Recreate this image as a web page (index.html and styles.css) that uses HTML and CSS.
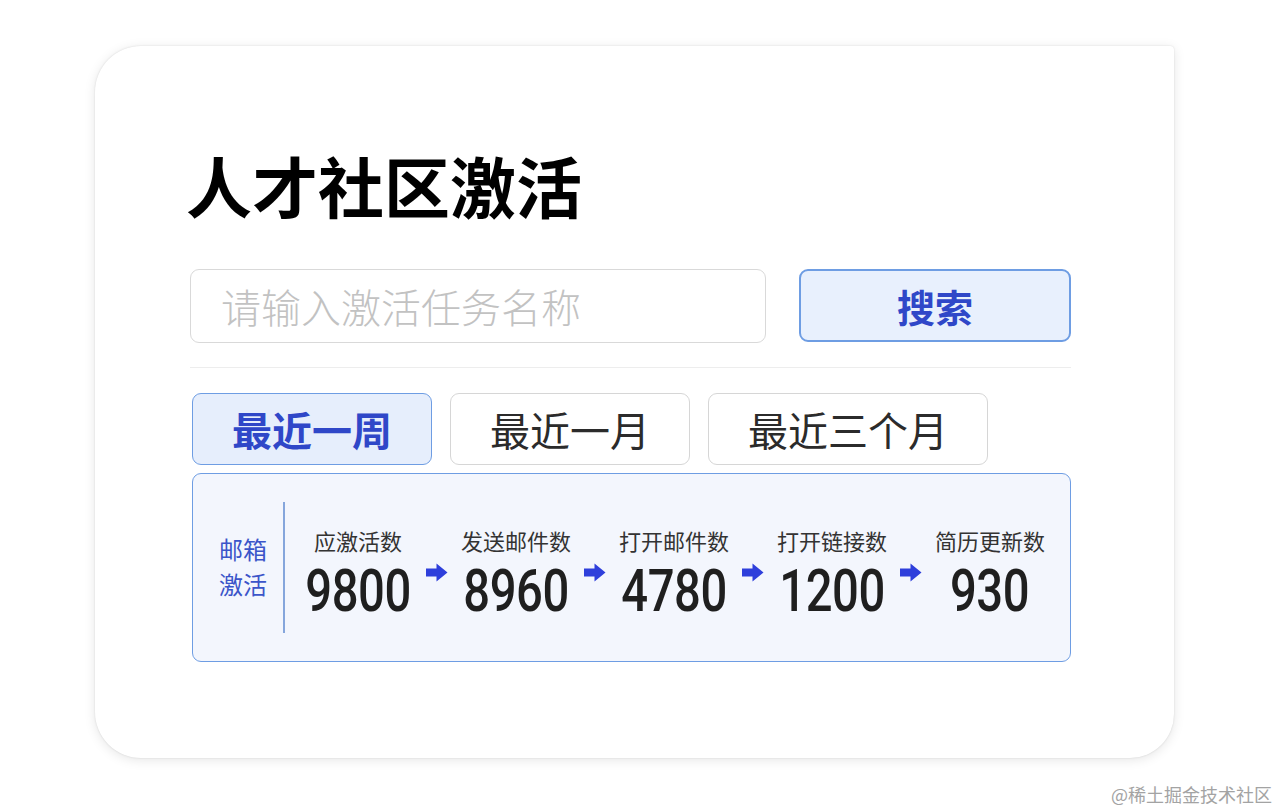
FILE: index.html
```html
<!DOCTYPE html>
<html lang="zh-CN">
<head>
<meta charset="utf-8">
<title>人才社区激活</title>
<link rel="stylesheet" href="styles.css">
</head>
<body>
<div class="page">
  <div class="card">
    <h1 class="title">人才社区激活</h1>
    <div class="search-row">
      <input class="search-input" type="text" placeholder="请输入激活任务名称">
      <button class="search-btn">搜索</button>
    </div>
    <div class="divider"></div>
    <div class="tabs">
      <div class="tab active">最近一周</div>
      <div class="tab">最近一月</div>
      <div class="tab">最近三个月</div>
    </div>
    <div class="panel">
      <div class="side">
        <div class="side-label"><div class="side-line-text">邮箱</div><div class="side-line-text">激活</div></div>
        <div class="side-line"></div>
      </div>
      <div class="stats">
        <div class="stat">
          <div class="stat-label">应激活数</div>
          <div class="stat-num"><span>9800</span></div>
        </div>
        <div class="arrow"><svg width="22" height="19" viewBox="0 0 22 19"><path d="M0 5.5H10.5V0.5L21.5 9.5L10.5 18.5V13.5H0Z" fill="#2e3fdb"/></svg></div>
        <div class="stat">
          <div class="stat-label">发送邮件数</div>
          <div class="stat-num"><span>8960</span></div>
        </div>
        <div class="arrow"><svg width="22" height="19" viewBox="0 0 22 19"><path d="M0 5.5H10.5V0.5L21.5 9.5L10.5 18.5V13.5H0Z" fill="#2e3fdb"/></svg></div>
        <div class="stat">
          <div class="stat-label">打开邮件数</div>
          <div class="stat-num"><span>4780</span></div>
        </div>
        <div class="arrow"><svg width="22" height="19" viewBox="0 0 22 19"><path d="M0 5.5H10.5V0.5L21.5 9.5L10.5 18.5V13.5H0Z" fill="#2e3fdb"/></svg></div>
        <div class="stat">
          <div class="stat-label">打开链接数</div>
          <div class="stat-num"><span>1200</span></div>
        </div>
        <div class="arrow"><svg width="22" height="19" viewBox="0 0 22 19"><path d="M0 5.5H10.5V0.5L21.5 9.5L10.5 18.5V13.5H0Z" fill="#2e3fdb"/></svg></div>
        <div class="stat">
          <div class="stat-label">简历更新数</div>
          <div class="stat-num"><span>930</span></div>
        </div>
      </div>
    </div>
  </div>
  <div class="watermark">@稀土掘金技术社区</div>
</div>
</body>
</html>
```

FILE: styles.css
```css
* { box-sizing: border-box; }
html, body { margin: 0; padding: 0; background: #ffffff; }
body {
  font-family: "Noto Sans CJK SC", "Noto Sans", sans-serif;
  width: 1280px;
  height: 812px;
  overflow: hidden;
}
.page {
  padding: 46px 0 0 95px;
}
.card {
  width: 1079px;
  height: 712px;
  background: #ffffff;
  border-radius: 46px 4px 44px 46px;
  box-shadow: 0 0 2px rgba(0,0,0,0.13), 0 2px 12px rgba(0,0,0,0.10);
  padding: 105px 103px 0 95px;
}
.title {
  margin: 0 0 0 -4px;
  font-size: 66px;
  line-height: 66px;
  font-weight: 700;
  color: #000;
  height: 66px;
}
.search-row {
  margin-top: 52px;
  display: flex;
  align-items: flex-start;
  gap: 33px;
}
.search-input {
  width: 576px;
  height: 74px;
  border: 1.5px solid #d9d9d9;
  border-radius: 9px;
  padding: 0 0 0 30px;
  font-family: "Noto Sans CJK SC", sans-serif;
  font-size: 40px;
  font-weight: 300;
  color: #333;
  outline: none;
  background: #fff;
}
.search-input::placeholder { color: #c2c2c2; }
.search-btn {
  width: 272px;
  height: 73px;
  border: 2px solid #6e9de3;
  border-radius: 9px;
  background: #e8f0fd;
  color: #2f47c8;
  font-family: "Noto Sans CJK SC", sans-serif;
  font-size: 38px;
  font-weight: 700;
  padding: 0;
  line-height: 1;
}
.divider {
  height: 1px;
  background: #ededed;
  margin: 24px 0 25px;
}
.tabs {
  display: flex;
  gap: 18px;
  margin-left: 2px;
}
.tab {
  height: 72px;
  padding: 0 39px;
  border: 1.5px solid #d6d6d6;
  border-radius: 9px;
  font-size: 40px;
  line-height: 1;
  color: #2b2b2b;
  display: flex;
  align-items: center;
  justify-content: center;
  background: #fff;
}
.tab.active {
  background: #e6eefc;
  border-color: #6e9de3;
  color: #2f47c8;
  font-weight: 700;
}
.panel {
  margin: 8px 0 0 2px;
  width: 879px;
  height: 189px;
  border: 1.5px solid #6e9de3;
  border-radius: 9px;
  background: #f3f6fd;
  padding: 27.5px 0 0 24px;
  display: flex;
  align-items: flex-start;
}
.side {
  display: flex;
  align-items: center;
  height: 131px;
}
.side-label {
  font-size: 24px;
  color: #3b55c9;
  width: 52px;
  margin-top: -2px;
  display: flex;
  flex-direction: column;
  align-items: center;
}
.side-line-text {
  line-height: 35px;
  height: 35px;
  white-space: nowrap;
}
.side-line {
  width: 2px;
  height: 131px;
  background: #85a6dc;
  margin-left: 14px;
}
.stats {
  display: flex;
  align-items: flex-start;
  margin-left: 18px;
  padding-top: 27px;
}
.stat {
  width: 110px;
  display: flex;
  flex-direction: column;
  align-items: center;
}
.stat-label {
  font-size: 22px;
  line-height: 22px;
  color: #333;
  white-space: nowrap;
}
.stat-num {
  margin-top: 10px;
  height: 59px;
  font-family: "Roboto", "Liberation Sans", sans-serif;
  font-weight: 500;
  font-size: 59px;
  line-height: 59px;
  color: #1f1f1f;
  display: flex;
  justify-content: center;
}
.stat-num span {
  display: inline-block;
  transform: scaleX(0.8);
  letter-spacing: -0.5px;
}
.arrow {
  width: 48px;
  display: flex;
  justify-content: center;
  margin-top: 34px;
}
.arrow svg { display: block; }
.watermark {
  margin-top: 27px;
  margin-left: -95px;
  width: 1280px;
  padding-right: 8px;
  text-align: right;
  font-size: 18px;
  line-height: 18px;
  color: #a3a3a3;
}
```
